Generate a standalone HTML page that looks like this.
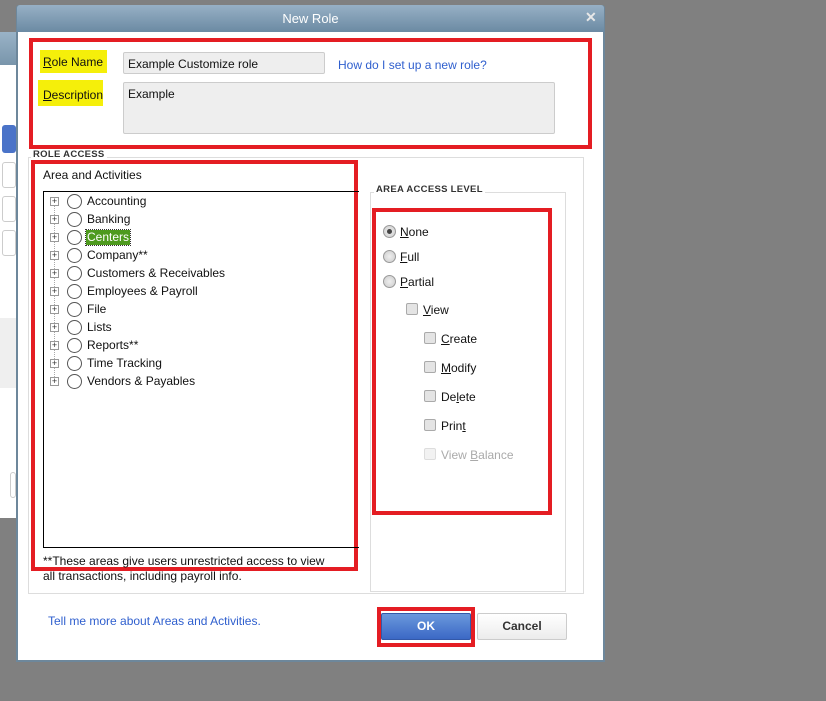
<!DOCTYPE html>
<html><head><style>
*{margin:0;padding:0;box-sizing:border-box}
body{width:826px;height:701px;background:#808080;position:relative;overflow:hidden;font-family:"Liberation Sans",Arial,sans-serif;font-size:12px;color:#111}
.a{position:absolute}
.red{position:absolute;border:4px solid #e41d23}
.hl{background:#f5ef0a}
u{text-decoration:underline}
.rad{position:absolute;width:13px;height:13px;border-radius:50%;border:1px solid #999;background:radial-gradient(circle,#eee,#ccc)}
.cb{position:absolute;width:12px;height:12px;border:1px solid #aaa;background:#e4e4e4;border-radius:2px}
.ti{position:absolute;left:50px;font-size:12px}
.ti .pl{position:absolute;left:0;top:3px;width:9px;height:9px;border:1px solid #999;background:#fff;font-size:9px;line-height:7px;text-align:center;color:#333}
.ti .rd{position:absolute;left:17px;top:0;width:15px;height:15px;border-radius:50%;border:1.5px solid #555;background:#fff}
.ti span.t{position:absolute;left:37px;top:0;white-space:nowrap;line-height:15px}
</style></head><body>
<!-- background window -->
<div class="a" style="left:0;top:32px;width:16px;height:486px;background:#fff"></div>
<div class="a" style="left:0;top:32px;width:16px;height:33px;background:linear-gradient(#9ab3c7,#7995ab)"></div>
<div class="a" style="left:2px;top:125px;width:14px;height:28px;background:#4a73c8;border-radius:3px"></div>
<div class="a" style="left:2px;top:162px;width:14px;height:26px;border:1px solid #ccc;border-radius:3px"></div>
<div class="a" style="left:2px;top:196px;width:14px;height:26px;border:1px solid #ccc;border-radius:3px"></div>
<div class="a" style="left:2px;top:230px;width:14px;height:26px;border:1px solid #ccc;border-radius:3px"></div>
<div class="a" style="left:0;top:318px;width:16px;height:70px;background:#efefef"></div>
<div class="a" style="left:10px;top:472px;width:6px;height:26px;border:1px solid #ccc;border-radius:3px"></div>
<!-- dialog -->
<div class="a" style="left:16px;top:5px;width:589px;height:657px;background:#6d879b;border-radius:3px 3px 0 0"></div>
<div class="a" style="left:17px;top:5px;width:587px;height:27px;background:linear-gradient(#97b0c5,#6b8aa3);border-radius:3px 3px 0 0"></div>
<div class="a" style="left:17px;top:11px;width:587px;text-align:center;color:#fff;font-size:13px">New Role</div>
<div class="a" style="left:585px;top:9px;color:#e8e8e8;font-size:14px;font-weight:bold">✕</div>
<div class="a" style="left:18px;top:32px;width:585px;height:628px;background:#fff"></div>

<div class="red" style="left:29px;top:38px;width:563px;height:111px"></div>
<div class="a hl" style="left:40px;top:50px;width:67px;height:23px"></div>
<div class="a hl" style="left:38px;top:80px;width:65px;height:26px"></div>
<div class="a" style="left:43px;top:55px;font-size:12px"><u>R</u>ole Name</div>
<div class="a" style="left:43px;top:88px;font-size:12px"><u>D</u>escription</div>
<div class="a" style="left:123px;top:52px;width:202px;height:22px;background:#eee;border:1px solid #ccc;border-radius:2px;padding:4px 4px">Example Customize role</div>
<div class="a" style="left:338px;top:58px;color:#2f5fce">How do I set up a new role?</div>
<div class="a" style="left:123px;top:82px;width:432px;height:52px;background:#eee;border:1px solid #ccc;border-radius:2px;padding:4px 4px">Example</div>

<div class="a" style="left:28px;top:157px;width:556px;height:437px;border:1px solid #ddd"></div>
<div class="a" style="left:31px;top:149px;background:#fff;padding:0 2px;font-size:9.5px;font-weight:bold;color:#333;letter-spacing:.3px">ROLE ACCESS</div>
<div class="red" style="left:31px;top:160px;width:327px;height:411px"></div>
<div class="a" style="left:43px;top:168px">Area and Activities</div>
<div class="a" style="left:43px;top:191px;width:316px;height:357px;border:1px solid #000;border-right:none"></div>
<div class="a" style="left:54px;top:201px;width:1px;height:180px;border-left:1px dotted #aaa"></div>
<div class="ti" style="top:194px"><div class="pl">+</div><div class="rd"></div><span class="t">Accounting</span></div>
<div class="ti" style="top:212px"><div class="pl">+</div><div class="rd"></div><span class="t">Banking</span></div>
<div class="ti" style="top:230px"><div class="pl">+</div><div class="rd"></div><span class="t" style="background:#4e9a1e;color:#fff;outline:1px dotted #333;padding:0 1px;left:36px">Centers</span></div>
<div class="ti" style="top:248px"><div class="pl">+</div><div class="rd"></div><span class="t">Company**</span></div>
<div class="ti" style="top:266px"><div class="pl">+</div><div class="rd"></div><span class="t">Customers &amp; Receivables</span></div>
<div class="ti" style="top:284px"><div class="pl">+</div><div class="rd"></div><span class="t">Employees &amp; Payroll</span></div>
<div class="ti" style="top:302px"><div class="pl">+</div><div class="rd"></div><span class="t">File</span></div>
<div class="ti" style="top:320px"><div class="pl">+</div><div class="rd"></div><span class="t">Lists</span></div>
<div class="ti" style="top:338px"><div class="pl">+</div><div class="rd"></div><span class="t">Reports**</span></div>
<div class="ti" style="top:356px"><div class="pl">+</div><div class="rd"></div><span class="t">Time Tracking</span></div>
<div class="ti" style="top:374px"><div class="pl">+</div><div class="rd"></div><span class="t">Vendors &amp; Payables</span></div>
<div class="a" style="left:43px;top:554px;line-height:15px">**These areas give users unrestricted access to view<br>all transactions, including payroll info.</div>

<div class="a" style="left:370px;top:192px;width:196px;height:400px;border:1px solid #ddd"></div>
<div class="a" style="left:374px;top:184px;background:#fff;padding:0 2px;font-size:9.5px;font-weight:bold;color:#333;letter-spacing:.3px">AREA ACCESS LEVEL</div>
<div class="red" style="left:372px;top:208px;width:180px;height:307px"></div>
<div class="rad" style="left:383px;top:225px"><div style="position:absolute;left:3px;top:3px;width:5px;height:5px;border-radius:50%;background:#444"></div></div>
<div class="a" style="left:400px;top:225px"><u>N</u>one</div>
<div class="rad" style="left:383px;top:250px"></div><div class="a" style="left:400px;top:250px"><u>F</u>ull</div>
<div class="rad" style="left:383px;top:275px"></div><div class="a" style="left:400px;top:275px"><u>P</u>artial</div>
<div class="cb" style="left:406px;top:303px"></div><div class="a" style="left:423px;top:303px"><u>V</u>iew</div>
<div class="cb" style="left:424px;top:332px"></div><div class="a" style="left:441px;top:332px"><u>C</u>reate</div>
<div class="cb" style="left:424px;top:361px"></div><div class="a" style="left:441px;top:361px"><u>M</u>odify</div>
<div class="cb" style="left:424px;top:390px"></div><div class="a" style="left:441px;top:390px">De<u>l</u>ete</div>
<div class="cb" style="left:424px;top:419px"></div><div class="a" style="left:441px;top:419px">Prin<u>t</u></div>
<div class="cb" style="left:424px;top:448px;border-color:#ddd;background:#f2f2f2"></div><div class="a" style="left:441px;top:448px;color:#aaa">View <u>B</u>alance</div>

<div class="a" style="left:48px;top:614px;color:#2f5fce">Tell me more about Areas and Activities.</div>
<div class="red" style="left:377px;top:607px;width:98px;height:40px"></div>
<div class="a" style="left:381px;top:613px;width:90px;height:27px;background:linear-gradient(#6a98dc,#3b68c5);border:1px solid #3358a8;border-radius:2px;color:#fff;font-weight:bold;text-align:center;line-height:25px">OK</div>
<div class="a" style="left:477px;top:613px;width:90px;height:27px;background:linear-gradient(#fff,#ececec);border:1px solid #ccc;border-radius:2px;color:#333;font-weight:bold;text-align:center;line-height:25px">Cancel</div>
</body></html>
